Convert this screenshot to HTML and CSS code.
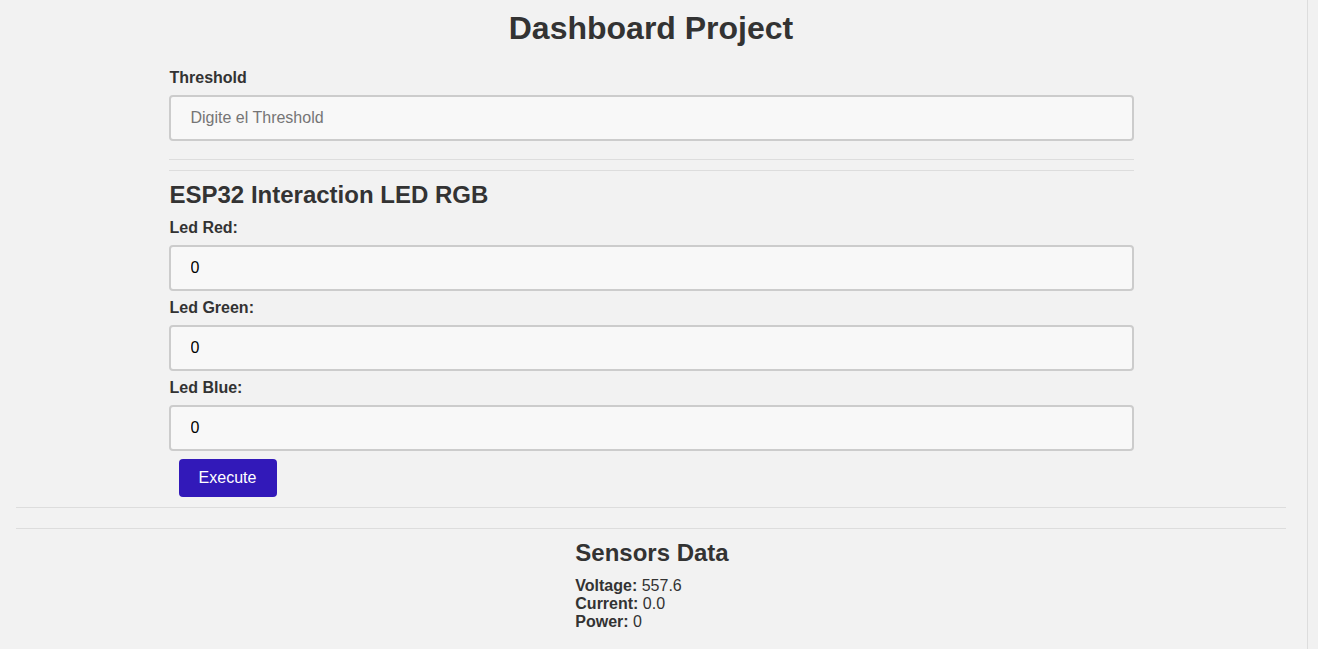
FILE: index.html
```html
<!DOCTYPE html>
<html lang="en">
<head>
<meta charset="utf-8">
<title>Dashboard Project</title>
<link rel="stylesheet" href="styles.css">
</head>
<body>
<div class="page">
  <main class="main">
    <h1 class="title">Dashboard Project</h1>
    <form class="form">
      <label class="label label-first" for="threshold">Threshold</label>
      <input class="field" id="threshold" type="text" placeholder="Digite el Threshold">
      <div class="rule rule-a"></div>
      <div class="rule rule-b"></div>
      <h2 class="section-title">ESP32 Interaction LED RGB</h2>
      <label class="label label-after-title" for="red">Led Red:</label>
      <input class="field" id="red" type="text" value="0">
      <label class="label" for="green">Led Green:</label>
      <input class="field" id="green" type="text" value="0">
      <label class="label" for="blue">Led Blue:</label>
      <input class="field" id="blue" type="text" value="0">
      <button class="btn" type="button">Execute</button>
    </form>
    <div class="rule rule-c"></div>
    <div class="rule rule-d"></div>
    <section class="sensors">
      <div class="sensors-inner">
        <h2 class="section-title sensors-title">Sensors Data</h2>
        <div class="reading"><b>Voltage:</b> 557.6</div>
        <div class="reading"><b>Current:</b> 0.0</div>
        <div class="reading"><b>Power:</b> 0</div>
      </div>
    </section>
  </main>
  <div class="scroll-strip"></div>
</div>
</body>
</html>
```
FILE: styles.css
```css
html, body {
  margin: 0;
  padding: 0;
  height: 100%;
  overflow: hidden;
}
body {
  background: #f2f2f2;
  color: #333333;
  font-family: "Liberation Sans", Arial, sans-serif;
  font-size: 16px;
}
.page {
  display: flex;
  height: 100%;
}
.main {
  flex: 1;
  padding: 0 21px 0 16px;
  min-width: 0;
}
.scroll-strip {
  width: 10px;
  border-left: 1px solid #dddddd;
  background: #f1f1f1;
}
.title {
  margin: 10px 0 0;
  font-size: 32px;
  line-height: 37px;
  text-align: center;
  font-weight: bold;
}
.form {
  width: 965px;
  margin: 0 auto;
  display: flex;
  flex-direction: column;
  align-items: stretch;
}
.label {
  display: block;
  font-weight: bold;
  line-height: 18px;
  margin: 8px 0 8px 1px;
}
.label-first {
  margin-top: 22px;
}
.label-after-title {
  margin-top: 10px;
}
.field {
  box-sizing: border-box;
  height: 46px;
  width: 100%;
  border: 2px solid #cccccc;
  border-radius: 4px;
  background: #f8f8f8;
  padding: 0 20px;
  font-family: "Liberation Sans", Arial, sans-serif;
  font-size: 16px;
  color: #000000;
  outline: none;
}
.field::placeholder {
  color: #757575;
}
.rule {
  height: 1px;
  background: #dddddd;
}
.rule-a {
  margin-top: 18px;
}
.rule-b {
  margin-top: 10px;
}
.section-title {
  margin: 10px 0 0 1px;
  font-size: 24px;
  line-height: 28px;
  font-weight: bold;
}
.btn {
  align-self: flex-start;
  margin: 8px 0 0 10px;
  width: 98px;
  height: 38px;
  border: none;
  border-radius: 4px;
  background: #3219b9;
  color: #ffffff;
  font-family: "Liberation Sans", Arial, sans-serif;
  font-size: 16px;
  padding: 0;
}
.rule-c {
  margin-top: 10px;
}
.rule-d {
  margin-top: 20px;
}
.sensors {
  display: flex;
  justify-content: center;
  padding-left: 2px;
}
.sensors-inner {
  text-align: left;
}
.sensors-title {
  margin: 10px 0 0;
}
.reading {
  line-height: 18px;
}
.reading:first-of-type {
  margin-top: 10px;
}
```
